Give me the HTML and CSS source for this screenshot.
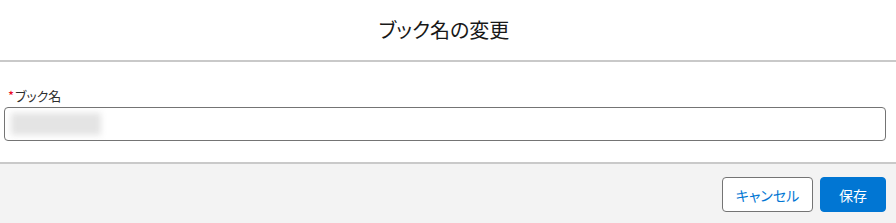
FILE: index.html
```html
<!DOCTYPE html>
<html lang="ja">
<head>
  <meta charset="UTF-8">
  <meta name="viewport" content="width=device-width, initial-scale=1.0">
  <title>ブック名の変更</title>
  <link rel="stylesheet" href="styles.css">
</head>
<body>

<div class="modal">
  <header class="modal-header">
    <h2>ブック名の変更</h2>
  </header>

  <section class="modal-body">
    <label class="field-label"><abbr class="required">*</abbr>ブック名</label>
    <div class="input">
      <span class="blurred"></span>
    </div>
  </section>

  <footer class="modal-footer">
    <button class="btn btn-neutral">キャンセル</button>
    <button class="btn btn-brand">保存</button>
  </footer>
</div>

</body>
</html>
```

FILE: styles.css
```css
body {
  margin: 0;
  padding: 0;
  font-family: "Noto Sans CJK JP", "Noto Sans", sans-serif;
  font-feature-settings: "palt";
  background: white;
  color: #181818;
}
.modal {
  width: 896px;
  height: 223px;
  display: flex;
  flex-direction: column;
}
.modal-header {
  height: 60px;
  border-bottom: 2px solid #c9c9c9;
  display: flex;
  align-items: center;
  justify-content: center;
  padding-right: 8px;
}
.modal-header h2 {
  margin: 0;
  font-size: 20px;
  font-weight: normal;
  line-height: 1;
}
.modal-body {
  height: 100px;
  padding: 25px 10px 0 4px;
  box-sizing: border-box;
}
.field-label {
  display: block;
  font-size: 13px;
  line-height: 18px;
  color: #2e2e2e;
  padding-left: 4px;
  margin-bottom: 2px;
}
.required {
  color: #ea001e;
  text-decoration: none;
  margin-right: 1px;
}
.input {
  height: 34px;
  border: 1px solid #747474;
  border-radius: 4px;
  box-sizing: border-box;
  padding: 5px 6px;
  overflow: hidden;
}
.blurred {
  display: block;
  width: 90px;
  height: 22px;
  background: #e4e4e4;
  filter: blur(3px);
}
.modal-footer {
  flex: 1;
  background: #f3f3f3;
  border-top: 2px solid #c9c9c9;
  display: flex;
  justify-content: flex-end;
  align-items: flex-start;
  padding: 13px 10px 0 0;
  gap: 7px;
}
.btn {
  height: 35px;
  border-radius: 4px;
  font-family: inherit;
  font-feature-settings: "palt";
  font-size: 14px;
  padding: 0;
  white-space: nowrap;
  cursor: pointer;
  box-sizing: border-box;
}
.btn-neutral {
  width: 91px;
  background: white;
  border: 1px solid #747474;
  color: #0176d3;
}
.btn-brand {
  width: 66px;
  background: #0176d3;
  border: 1px solid #0176d3;
  color: white;
}
```
